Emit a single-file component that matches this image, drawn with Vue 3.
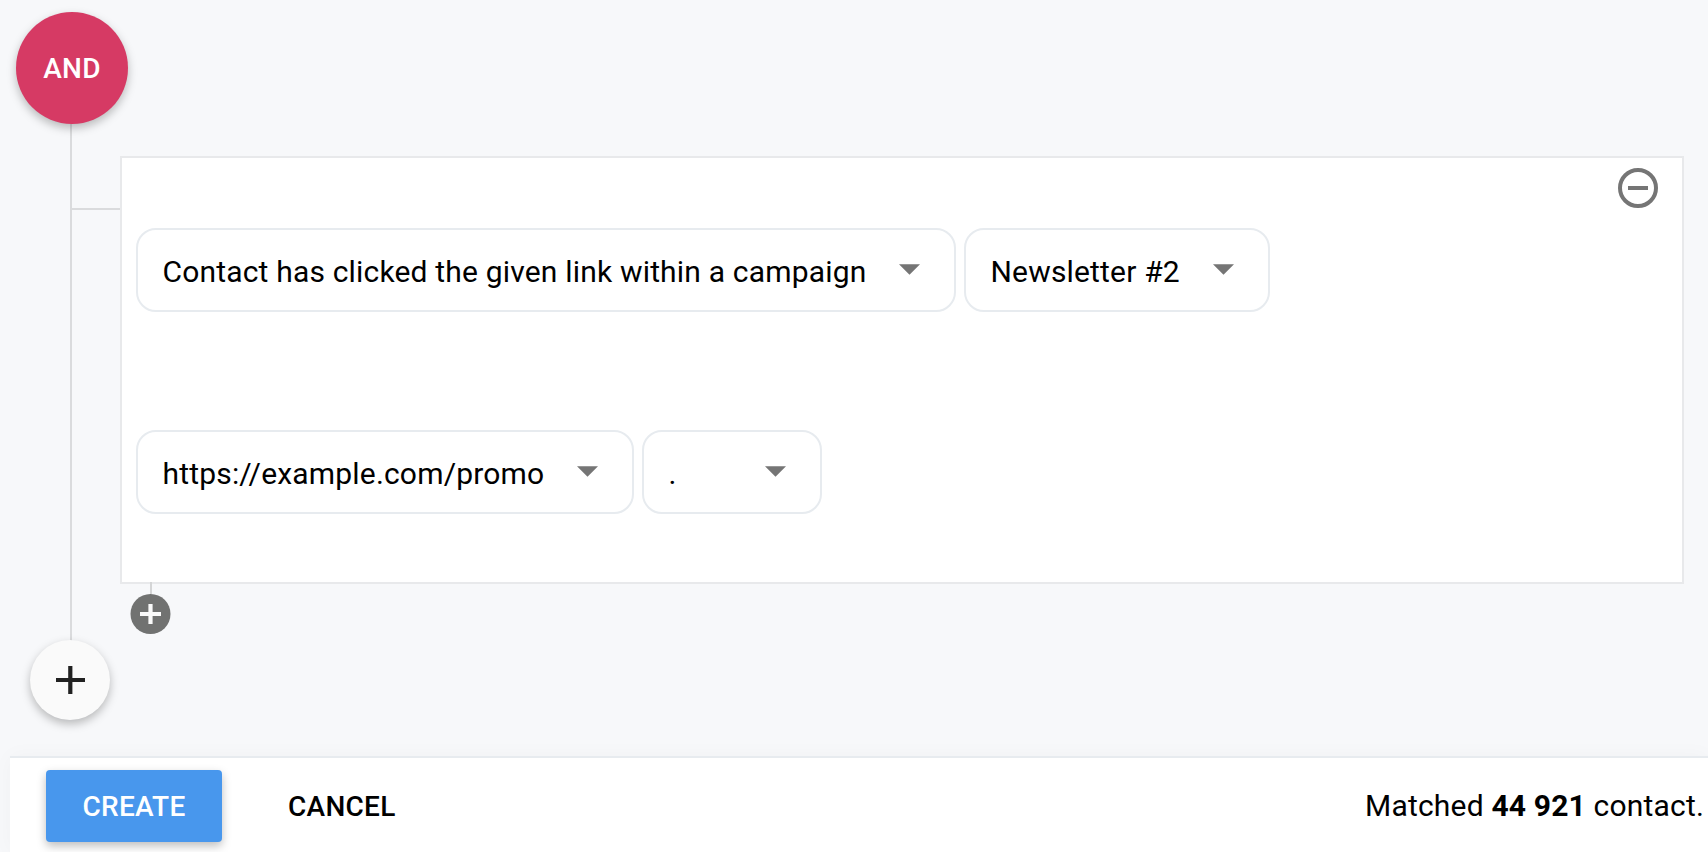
<script setup>
const rows = [
  [
    { label: 'Contact has clicked the given link within a campaign', size: 'event' },
    { label: 'Newsletter #2', size: 'campaign' },
  ],
  [
    { label: 'https://example.com/promo', size: 'link' },
    { label: '.', size: 'period' },
  ],
]
</script>

<template>
  <div class="page">
    <main class="builder">
      <div class="trunk"></div>
      <button class="operator">AND</button>
      <div class="group">
        <div class="branch"></div>
        <section class="card">
          <button class="remove" aria-label="Remove condition">
            <svg width="40" height="40" viewBox="0 0 40 40">
              <circle cx="20" cy="20" r="18" fill="none" stroke="#757575" stroke-width="4" />
              <path d="M10 18h20v4H10z" fill="#757575" />
            </svg>
          </button>
          <div v-for="(row, i) in rows" :key="i" class="row">
            <div v-for="s in row" :key="s.size" class="select" :class="s.size">
              <span class="label">{{ s.label }}</span>
              <svg class="arrow" width="21" height="11" viewBox="0 0 21 11">
                <path d="M0 .3h21L10.5 10.8z" fill="#757575" />
              </svg>
            </div>
          </div>
        </section>
        <div class="stem"></div>
        <button class="nested" aria-label="Add nested condition">
          <svg width="41" height="40" viewBox="0 0 41 40">
            <circle cx="20.5" cy="20" r="20" fill="#717271" />
            <path d="M18.4 10h4.2v8H31v4h-8.4v8h-4.2v-8H10v-4h8.4z" fill="#fafafa" />
          </svg>
        </button>
      </div>
      <button class="add" aria-label="Add condition">
        <svg width="30" height="28" viewBox="0 0 30 28">
          <path d="M13.2 0h4.2v12H30v4H17.4v12h-4.2V16H1v-4h12.2z" fill="#212121" />
        </svg>
      </button>
    </main>
    <footer class="footer">
      <button class="create">CREATE</button>
      <button class="cancel">CANCEL</button>
      <p class="matched">Matched <b>44 921</b> contact.</p>
    </footer>
  </div>
</template>

<style>
body {
  margin: 0;
  background: #f7f8fa;
}
</style>

<style scoped>
.page {
  display: flex;
  flex-direction: column;
  width: 1708px;
  height: 852px;
  overflow: hidden;
  background: #f7f8fa;
  font-family: Roboto, sans-serif;
  font-size: 30px;
  letter-spacing: 0.18px;
  color: #000;
}
button {
  display: flex;
  align-items: center;
  justify-content: center;
  box-sizing: border-box;
  padding: 0;
  border: 0;
  background: none;
  font: 500 28px/36px Roboto, sans-serif;
  letter-spacing: 0.28px;
}
svg {
  display: block;
  flex: none;
}
.builder {
  position: relative;
  height: 744px;
  padding-top: 12px;
  flex: none;
}
.trunk {
  position: absolute;
  left: 70px;
  top: 100px;
  width: 2px;
  height: 560px;
  background: #dadbdd;
}
.operator {
  position: relative;
  width: 112px;
  height: 112px;
  margin-left: 16px;
  padding-top: 2px;
  border-radius: 50%;
  background: #d63a64;
  color: #fff;
  box-shadow: 0 4px 10px rgba(0, 0, 0, 0.26);
}
.group {
  position: relative;
  margin: 32px 24px 0 120px;
  height: 484px;
}
.branch {
  position: absolute;
  left: -48px;
  top: 52px;
  width: 48px;
  height: 2px;
  background: #dadbdd;
}
.card {
  position: relative;
  display: flex;
  flex-direction: column;
  gap: 118px;
  box-sizing: border-box;
  height: 428px;
  padding: 70px 14px 0;
  border: 2px solid #e8e9eb;
  background: #fff;
}
.remove {
  position: absolute;
  right: 24px;
  top: 10px;
}
.row {
  display: flex;
  gap: 8px;
}
.select {
  display: flex;
  align-items: center;
  justify-content: space-between;
  box-sizing: border-box;
  height: 84px;
  padding: 0 34px 0 24.5px;
  border: 2px solid #e7ebef;
  border-radius: 20px;
  white-space: nowrap;
}
.label {
  padding-top: 3px;
  line-height: 36px;
}
.arrow {
  margin-top: -1px;
}
.event { width: 820px; }
.campaign { width: 306px; }
.link { width: 498px; }
.period { width: 180px; }
.stem {
  width: 2px;
  height: 12px;
  margin: -2px 0 0 30px;
  position: relative;
  background: #d4d5d6;
}
.nested {
  margin-left: 10px;
}
.add {
  position: relative;
  width: 80px;
  height: 80px;
  margin-left: 30px;
  border-radius: 50%;
  background: #fafafa;
  box-shadow: 0 4px 10px rgba(0, 0, 0, 0.26);
}
.footer {
  display: flex;
  align-items: center;
  box-sizing: border-box;
  height: 96px;
  margin-left: 10px;
  padding: 2px 4px 0 36px;
  border-top: 2px solid #e7ebef;
  background: #fff;
  box-shadow: 0 0 20px rgba(0, 0, 0, 0.03);
}
.create {
  width: 176px;
  height: 72px;
  padding-top: 2px;
  border-radius: 4px;
  background: #4897ed;
  color: #fff;
  box-shadow: 0 4px 10px rgba(0, 0, 0, 0.26);
}
.cancel {
  margin-left: 66px;
  padding-top: 2px;
  color: #000;
}
.matched {
  margin: 0 0 0 auto;
  line-height: 36px;
}
.matched b {
  font-weight: 700;
}
</style>
